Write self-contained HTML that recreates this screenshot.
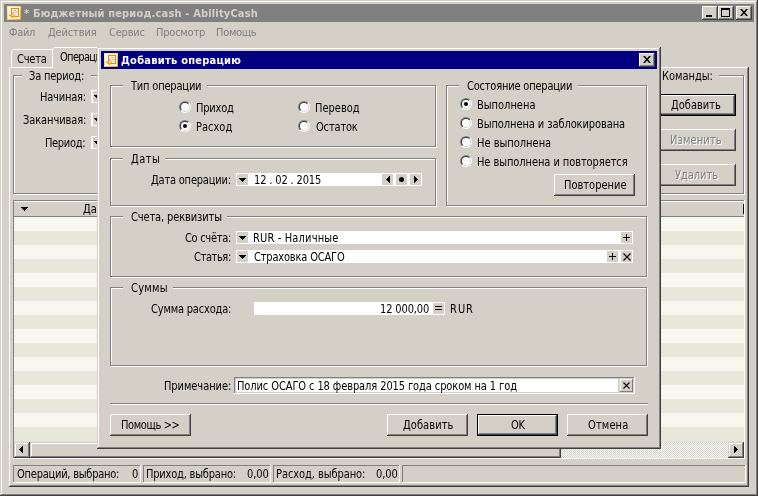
<!DOCTYPE html>
<html lang="ru"><head><meta charset="utf-8"><title>AbilityCash</title><style>
html,body{margin:0;padding:0}
body{width:758px;height:496px;position:relative;overflow:hidden;background:#d4d0c8;
font-family:"DejaVu Sans Condensed","DejaVu Sans","Liberation Sans",sans-serif;font-stretch:condensed;font-size:11px;color:#000}
#w{position:absolute;left:0;top:0;width:758px;height:496px;overflow:hidden}
#w div,#w span,#w svg{position:absolute;box-sizing:content-box}
.t{white-space:pre;line-height:13px;height:13px;will-change:transform}
.b{font-weight:bold}
.s{transform:scaleY(1.125);transform-origin:0 10px}
.r{width:12px;height:12px;border-radius:50%;background:linear-gradient(135deg,#808080 50%,#fff 50%)}
.r i,.r b,.r u{position:absolute;display:block}
.r i{left:1px;top:1px;width:10px;height:10px;border-radius:50%;background:linear-gradient(135deg,#404040 50%,#d4d0c8 50%)}
.r b{left:2px;top:2px;width:8px;height:8px;border-radius:50%;background:#fff}
.r u{position:absolute;left:4px;top:4px;width:4px;height:4px;border-radius:50%;background:#000}
</style></head><body><div id="w">
<div style="left:0px;top:0px;width:758px;height:496px;background:#d4d0c8;"></div>
<div style="left:1px;top:1px;width:755px;height:1px;background:#fff;"></div>
<div style="left:1px;top:1px;width:1px;height:493px;background:#fff;"></div>
<div style="left:756px;top:1px;width:1px;height:494px;background:#808080;"></div>
<div style="left:1px;top:494px;width:756px;height:1px;background:#808080;"></div>
<div style="left:757px;top:0px;width:1px;height:496px;background:#404040;"></div>
<div style="left:0px;top:495px;width:758px;height:1px;background:#404040;"></div>
<div style="left:4px;top:4px;width:750px;height:18px;background:#808080;"></div>
<svg class="ic" style="left:7px;top:6px" width="14" height="14" viewBox="0 0 14 14"><defs><linearGradient id="g1" x1="0" y1="0" x2="1" y2="1"><stop offset="0" stop-color="#fff2a8"/><stop offset="0.5" stop-color="#ffd060"/><stop offset="1" stop-color="#f09410"/></linearGradient></defs><rect width="14" height="14" fill="url(#g1)"/><rect x="1" y="1" width="12" height="12" fill="#fff4dc"/><rect x="2" y="2" width="2" height="9" fill="#fff"/><rect x="4.5" y="2.5" width="7" height="8" fill="#ffe2b8" stroke="#ee8608" stroke-width="1"/><path d="M5 3.5h6M5 5.5h6M5 7.5h6M7 9.5h4" stroke="#fff" stroke-width="1"/><path d="M7.5 4.5h2M6 6.5h1M8.5 6.5h1.5" stroke="#e89830" stroke-width="1"/><path d="M2 8.5l1.5 1.5 2.5-3M4.5 10.5l1.2 1.2 2.3-3" stroke="#f2a838" stroke-width="1.2" fill="none"/></svg>
<span id="t0" class="t b" style="left:24.00px;top:7px;letter-spacing:0.167px;color:#d4d0c8;">* Бюджетный период.cash - AbilityCash</span>
<div style="left:702px;top:6px;width:16px;height:14px;background:#404040;"></div>
<div style="left:702px;top:6px;width:15px;height:13px;background:#fff;"></div>
<div style="left:703px;top:7px;width:14px;height:12px;background:#808080;"></div>
<div style="left:703px;top:7px;width:13px;height:11px;background:#d4d0c8;"></div>
<div style="left:718px;top:6px;width:16px;height:14px;background:#404040;"></div>
<div style="left:718px;top:6px;width:15px;height:13px;background:#fff;"></div>
<div style="left:719px;top:7px;width:14px;height:12px;background:#808080;"></div>
<div style="left:719px;top:7px;width:13px;height:11px;background:#d4d0c8;"></div>
<div style="left:736px;top:6px;width:16px;height:14px;background:#404040;"></div>
<div style="left:736px;top:6px;width:15px;height:13px;background:#fff;"></div>
<div style="left:737px;top:7px;width:14px;height:12px;background:#808080;"></div>
<div style="left:737px;top:7px;width:13px;height:11px;background:#d4d0c8;"></div>
<div style="left:706px;top:15px;width:6px;height:2px;background:#000;"></div>
<div style="left:721px;top:8px;width:9px;height:9px;background:#000;"></div>
<div style="left:722px;top:10px;width:7px;height:6px;background:#d4d0c8;"></div>
<svg style="left:740px;top:9px" width="8" height="7" viewBox="0 0 8 7"><path d="M0 0h2l2 2.5L6 0h2L5 3.5 8 7H6L4 4.5 2 7H0l3-3.5z" fill="#000"/></svg>
<span id="t1" class="t n" style="left:9.00px;top:26px;letter-spacing:-0.333px;color:#808080;">Файл</span>
<span id="t2" class="t n" style="left:48.00px;top:26px;letter-spacing:-0.143px;color:#808080;">Действия</span>
<span id="t3" class="t n" style="left:109.00px;top:26px;letter-spacing:-0.200px;color:#808080;">Сервис</span>
<span id="t4" class="t n" style="left:155.50px;top:26px;letter-spacing:-0.214px;color:#808080;">Просмотр</span>
<span id="t5" class="t n" style="left:215.50px;top:26px;letter-spacing:-0.300px;color:#808080;">Помощь</span>
<div style="left:9px;top:67px;width:739px;height:1px;background:#fff;"></div>
<div style="left:9px;top:67px;width:1px;height:419px;background:#fff;"></div>
<div style="left:747px;top:68px;width:1px;height:418px;background:#808080;"></div>
<div style="left:10px;top:485px;width:738px;height:1px;background:#808080;"></div>
<div style="left:748px;top:67px;width:1px;height:420px;background:#404040;"></div>
<div style="left:9px;top:486px;width:740px;height:1px;background:#404040;"></div>
<div style="left:11px;top:51px;width:1px;height:16px;background:#fff;"></div>
<div style="left:12px;top:50px;width:1px;height:1px;background:#fff;"></div>
<div style="left:13px;top:49px;width:39px;height:1px;background:#fff;"></div>
<span id="t6" class="t s" style="left:17.30px;top:53px;letter-spacing:-0.225px;">Счета</span>
<div style="left:52px;top:47px;width:60px;height:21px;background:#d4d0c8;"></div>
<div style="left:52px;top:49px;width:1px;height:19px;background:#fff;"></div>
<div style="left:53px;top:48px;width:1px;height:1px;background:#fff;"></div>
<div style="left:54px;top:47px;width:57px;height:1px;background:#fff;"></div>
<span id="t7" class="t s" style="left:59.50px;top:51px;letter-spacing:-0.671px;">Операции</span>
<div style="left:14px;top:76px;width:385px;height:117px;border:1px solid #fff"></div>
<div style="left:13px;top:75px;width:385px;height:117px;border:1px solid #808080"></div>
<div style="left:22px;top:75px;width:69px;height:2px;background:#d4d0c8;"></div>
<span id="t8" class="t s" style="left:29.00px;top:70px;letter-spacing:-0.200px;">За период:</span>
<span id="t9" class="t s" style="left:39.50px;top:91px;letter-spacing:-0.214px;">Начиная:</span>
<div style="left:91px;top:90px;width:120px;height:13px;background:#fff;"></div>
<div style="left:93px;top:91px;width:11px;height:11px;background:#d4d0c8;"></div>
<div style="left:94px;top:95px;width:7px;height:1px;background:#000;"></div>
<div style="left:95px;top:96px;width:5px;height:1px;background:#000;"></div>
<div style="left:96px;top:97px;width:3px;height:1px;background:#000;"></div>
<div style="left:97px;top:98px;width:1px;height:1px;background:#000;"></div>
<span id="t10" class="t s" style="left:23.00px;top:114px;letter-spacing:-0.100px;">Заканчивая:</span>
<div style="left:91px;top:113px;width:120px;height:13px;background:#fff;"></div>
<div style="left:93px;top:114px;width:11px;height:11px;background:#d4d0c8;"></div>
<div style="left:94px;top:118px;width:7px;height:1px;background:#000;"></div>
<div style="left:95px;top:119px;width:5px;height:1px;background:#000;"></div>
<div style="left:96px;top:120px;width:3px;height:1px;background:#000;"></div>
<div style="left:97px;top:121px;width:1px;height:1px;background:#000;"></div>
<span id="t11" class="t s" style="left:45.00px;top:137px;letter-spacing:-0.333px;">Период:</span>
<div style="left:91px;top:136px;width:120px;height:13px;background:#fff;"></div>
<div style="left:93px;top:137px;width:11px;height:11px;background:#d4d0c8;"></div>
<div style="left:94px;top:141px;width:7px;height:1px;background:#000;"></div>
<div style="left:95px;top:142px;width:5px;height:1px;background:#000;"></div>
<div style="left:96px;top:143px;width:3px;height:1px;background:#000;"></div>
<div style="left:97px;top:144px;width:1px;height:1px;background:#000;"></div>
<div style="left:501px;top:76px;width:242px;height:117px;border:1px solid #fff"></div>
<div style="left:500px;top:75px;width:242px;height:117px;border:1px solid #808080"></div>
<div style="left:658px;top:75px;width:61px;height:2px;background:#d4d0c8;"></div>
<span id="t12" class="t s" style="left:662.00px;top:70px;letter-spacing:-0.029px;">Команды:</span>
<div style="left:600px;top:94px;width:136px;height:22px;background:#000;"></div>
<div style="left:601px;top:95px;width:134px;height:20px;background:#404040;"></div>
<div style="left:601px;top:95px;width:133px;height:19px;background:#fff;"></div>
<div style="left:602px;top:96px;width:132px;height:18px;background:#808080;"></div>
<div style="left:602px;top:96px;width:131px;height:17px;background:#d4d0c8;"></div>
<span id="t13" class="t s" style="left:671.00px;top:99px;letter-spacing:0.000px;">Добавить</span>
<div style="left:600px;top:129px;width:136px;height:22px;background:#404040;"></div>
<div style="left:600px;top:129px;width:135px;height:21px;background:#fff;"></div>
<div style="left:601px;top:130px;width:134px;height:20px;background:#808080;"></div>
<div style="left:601px;top:130px;width:133px;height:19px;background:#d4d0c8;"></div>
<span id="t14" class="t s" style="left:670.00px;top:134px;letter-spacing:0.129px;color:#808080;text-shadow:1px 1px 0 #fff;">Изменить</span>
<div style="left:600px;top:164px;width:136px;height:22px;background:#404040;"></div>
<div style="left:600px;top:164px;width:135px;height:21px;background:#fff;"></div>
<div style="left:601px;top:165px;width:134px;height:20px;background:#808080;"></div>
<div style="left:601px;top:165px;width:133px;height:19px;background:#d4d0c8;"></div>
<span id="t15" class="t s" style="left:674.50px;top:169px;letter-spacing:-0.050px;color:#808080;text-shadow:1px 1px 0 #fff;">Удалить</span>
<div style="left:13px;top:200px;width:732px;height:259px;background:#fff;"></div>
<div style="left:13px;top:200px;width:731px;height:258px;background:#808080;"></div>
<div style="left:14px;top:201px;width:730px;height:257px;background:#d4d0c8;"></div>
<div style="left:14px;top:201px;width:730px;height:1px;background:#fff;"></div>
<div style="left:14px;top:216px;width:730px;height:1px;background:#808080;"></div>
<div style="left:21px;top:207px;width:7px;height:1px;background:#000;"></div>
<div style="left:22px;top:208px;width:5px;height:1px;background:#000;"></div>
<div style="left:23px;top:209px;width:3px;height:1px;background:#000;"></div>
<div style="left:24px;top:210px;width:1px;height:1px;background:#000;"></div>
<span id="t16" class="t s" style="left:82.50px;top:203px;letter-spacing:0.000px;">Дата</span>
<div style="left:743px;top:204px;width:1px;height:10px;background:#000;"></div>
<div style="left:14px;top:217px;width:730px;height:14px;background:#f7f7ef;"></div>
<div style="left:14px;top:231px;width:730px;height:14px;background:#e7e7db;"></div>
<div style="left:14px;top:245px;width:730px;height:14px;background:#f7f7ef;"></div>
<div style="left:14px;top:259px;width:730px;height:14px;background:#e7e7db;"></div>
<div style="left:14px;top:273px;width:730px;height:14px;background:#f7f7ef;"></div>
<div style="left:14px;top:287px;width:730px;height:14px;background:#e7e7db;"></div>
<div style="left:14px;top:301px;width:730px;height:14px;background:#f7f7ef;"></div>
<div style="left:14px;top:315px;width:730px;height:14px;background:#e7e7db;"></div>
<div style="left:14px;top:329px;width:730px;height:14px;background:#f7f7ef;"></div>
<div style="left:14px;top:343px;width:730px;height:14px;background:#e7e7db;"></div>
<div style="left:14px;top:357px;width:730px;height:14px;background:#f7f7ef;"></div>
<div style="left:14px;top:371px;width:730px;height:14px;background:#e7e7db;"></div>
<div style="left:14px;top:385px;width:730px;height:14px;background:#f7f7ef;"></div>
<div style="left:14px;top:399px;width:730px;height:14px;background:#e7e7db;"></div>
<div style="left:14px;top:413px;width:730px;height:14px;background:#f7f7ef;"></div>
<div style="left:14px;top:427px;width:730px;height:14px;background:#e7e7db;"></div>
<div style="left:14px;top:441px;width:730px;height:1px;background:#e4e2d8;"></div>
<div style="left:14px;top:442px;width:730px;height:16px;background:conic-gradient(#fff 25%,#d4d0c8 0 50%,#fff 0 75%,#d4d0c8 0) 0 0/2px 2px;"></div>
<div style="left:14px;top:442px;width:16px;height:16px;background:#404040;"></div>
<div style="left:14px;top:442px;width:15px;height:15px;background:#d4d0c8;"></div>
<div style="left:15px;top:443px;width:14px;height:14px;background:#808080;"></div>
<div style="left:15px;top:443px;width:13px;height:13px;background:#fff;"></div>
<div style="left:16px;top:444px;width:12px;height:12px;background:#d4d0c8;"></div>
<div style="left:19px;top:449px;width:1px;height:1px;background:#000;"></div>
<div style="left:20px;top:448px;width:1px;height:3px;background:#000;"></div>
<div style="left:21px;top:447px;width:1px;height:5px;background:#000;"></div>
<div style="left:22px;top:446px;width:1px;height:7px;background:#000;"></div>
<div style="left:728px;top:442px;width:16px;height:16px;background:#404040;"></div>
<div style="left:728px;top:442px;width:15px;height:15px;background:#d4d0c8;"></div>
<div style="left:729px;top:443px;width:14px;height:14px;background:#808080;"></div>
<div style="left:729px;top:443px;width:13px;height:13px;background:#fff;"></div>
<div style="left:730px;top:444px;width:12px;height:12px;background:#d4d0c8;"></div>
<div style="left:734px;top:446px;width:1px;height:7px;background:#000;"></div>
<div style="left:735px;top:447px;width:1px;height:5px;background:#000;"></div>
<div style="left:736px;top:448px;width:1px;height:3px;background:#000;"></div>
<div style="left:737px;top:449px;width:1px;height:1px;background:#000;"></div>
<div style="left:30px;top:442px;width:531px;height:16px;background:#404040;"></div>
<div style="left:30px;top:442px;width:530px;height:15px;background:#d4d0c8;"></div>
<div style="left:31px;top:443px;width:529px;height:14px;background:#808080;"></div>
<div style="left:31px;top:443px;width:528px;height:13px;background:#fff;"></div>
<div style="left:32px;top:444px;width:527px;height:12px;background:#d4d0c8;"></div>
<div style="left:13px;top:465px;width:128px;height:1px;background:#808080;"></div>
<div style="left:13px;top:465px;width:1px;height:18px;background:#808080;"></div>
<div style="left:13px;top:482px;width:128px;height:1px;background:#fff;"></div>
<div style="left:140px;top:465px;width:1px;height:18px;background:#fff;"></div>
<div style="left:143px;top:465px;width:128px;height:1px;background:#808080;"></div>
<div style="left:143px;top:465px;width:1px;height:18px;background:#808080;"></div>
<div style="left:143px;top:482px;width:128px;height:1px;background:#fff;"></div>
<div style="left:270px;top:465px;width:1px;height:18px;background:#fff;"></div>
<div style="left:273px;top:465px;width:127px;height:1px;background:#808080;"></div>
<div style="left:273px;top:465px;width:1px;height:18px;background:#808080;"></div>
<div style="left:273px;top:482px;width:127px;height:1px;background:#fff;"></div>
<div style="left:399px;top:465px;width:1px;height:18px;background:#fff;"></div>
<div style="left:402px;top:465px;width:344px;height:1px;background:#808080;"></div>
<div style="left:402px;top:465px;width:1px;height:18px;background:#808080;"></div>
<div style="left:402px;top:482px;width:344px;height:1px;background:#fff;"></div>
<div style="left:745px;top:465px;width:1px;height:18px;background:#fff;"></div>
<span id="t17" class="t s" style="left:17.00px;top:468px;letter-spacing:-0.241px;">Операций, выбрано:</span>
<span id="t18" class="t s" style="left:132.00px;top:468px;letter-spacing:0.000px;">0</span>
<span id="t19" class="t s" style="left:146.00px;top:468px;letter-spacing:-0.200px;">Приход, выбрано:</span>
<span id="t20" class="t s" style="left:246.70px;top:468px;letter-spacing:-0.067px;">0,00</span>
<span id="t21" class="t s" style="left:275.70px;top:468px;letter-spacing:-0.073px;">Расход, выбрано:</span>
<span id="t22" class="t s" style="left:375.90px;top:468px;letter-spacing:-0.067px;">0,00</span>
<div style="left:97px;top:47px;width:564px;height:402px;background:#404040;"></div>
<div style="left:97px;top:47px;width:563px;height:401px;background:#d4d0c8;"></div>
<div style="left:98px;top:48px;width:562px;height:400px;background:#808080;"></div>
<div style="left:98px;top:48px;width:561px;height:399px;background:#fff;"></div>
<div style="left:99px;top:49px;width:560px;height:398px;background:#d4d0c8;"></div>
<div style="left:101px;top:51px;width:556px;height:18px;background:#000080;"></div>
<svg class="ic" style="left:104px;top:53px" width="14" height="14" viewBox="0 0 14 14"><defs><linearGradient id="g2" x1="0" y1="0" x2="1" y2="1"><stop offset="0" stop-color="#fff2a8"/><stop offset="0.5" stop-color="#ffd060"/><stop offset="1" stop-color="#f09410"/></linearGradient></defs><rect width="14" height="14" fill="url(#g2)"/><rect x="1" y="1" width="12" height="12" fill="#fff4dc"/><rect x="2" y="2" width="2" height="9" fill="#fff"/><rect x="4.5" y="2.5" width="7" height="8" fill="#ffe2b8" stroke="#ee8608" stroke-width="1"/><path d="M5 3.5h6M5 5.5h6M5 7.5h6M7 9.5h4" stroke="#fff" stroke-width="1"/><path d="M7.5 4.5h2M6 6.5h1M8.5 6.5h1.5" stroke="#e89830" stroke-width="1"/><path d="M2 8.5l1.5 1.5 2.5-3M4.5 10.5l1.2 1.2 2.3-3" stroke="#f2a838" stroke-width="1.2" fill="none"/></svg>
<span id="t23" class="t b" style="left:121.30px;top:54px;letter-spacing:0.256px;color:#fff;">Добавить операцию</span>
<div style="left:639px;top:53px;width:16px;height:14px;background:#404040;"></div>
<div style="left:639px;top:53px;width:15px;height:13px;background:#fff;"></div>
<div style="left:640px;top:54px;width:14px;height:12px;background:#808080;"></div>
<div style="left:640px;top:54px;width:13px;height:11px;background:#d4d0c8;"></div>
<svg style="left:643px;top:56px" width="8" height="7" viewBox="0 0 8 7"><path d="M0 0h2l2 2.5L6 0h2L5 3.5 8 7H6L4 4.5 2 7H0l3-3.5z" fill="#000"/></svg>
<div style="left:111px;top:86px;width:324px;height:60px;border:1px solid #fff"></div>
<div style="left:110px;top:85px;width:324px;height:60px;border:1px solid #808080"></div>
<div style="left:123px;top:85px;width:84px;height:2px;background:#d4d0c8;"></div>
<span id="t24" class="t s" style="left:131.20px;top:80px;letter-spacing:-0.191px;">Тип операции</span>
<div style="left:447px;top:86px;width:199px;height:119px;border:1px solid #fff"></div>
<div style="left:446px;top:85px;width:199px;height:119px;border:1px solid #808080"></div>
<div style="left:459px;top:85px;width:119px;height:2px;background:#d4d0c8;"></div>
<span id="t25" class="t s" style="left:466.80px;top:80px;letter-spacing:-0.200px;">Состояние операции</span>
<div style="left:111px;top:159px;width:324px;height:46px;border:1px solid #fff"></div>
<div style="left:110px;top:158px;width:324px;height:46px;border:1px solid #808080"></div>
<div style="left:123px;top:158px;width:42px;height:2px;background:#d4d0c8;"></div>
<span id="t26" class="t s" style="left:131.00px;top:153px;letter-spacing:0.467px;">Даты</span>
<div style="left:111px;top:217px;width:535px;height:59px;border:1px solid #fff"></div>
<div style="left:110px;top:216px;width:535px;height:59px;border:1px solid #808080"></div>
<div style="left:123px;top:216px;width:104px;height:2px;background:#d4d0c8;"></div>
<span id="t27" class="t s" style="left:130.60px;top:211px;letter-spacing:-0.127px;">Счета, реквизиты</span>
<div style="left:111px;top:288px;width:535px;height:77px;border:1px solid #fff"></div>
<div style="left:110px;top:287px;width:535px;height:77px;border:1px solid #808080"></div>
<div style="left:123px;top:287px;width:50px;height:2px;background:#d4d0c8;"></div>
<span id="t28" class="t s" style="left:130.60px;top:282px;letter-spacing:0.275px;">Суммы</span>
<div class="r" style="left:179px;top:101px"><i></i><b></b></div>
<span id="t29" class="t s" style="left:196.00px;top:102px;letter-spacing:-0.200px;">Приход</span>
<div class="r" style="left:179px;top:120px"><i></i><b></b><u></u></div>
<span id="t30" class="t s" style="left:196.00px;top:121px;letter-spacing:0.000px;">Расход</span>
<div class="r" style="left:298px;top:101px"><i></i><b></b></div>
<span id="t31" class="t s" style="left:315.00px;top:102px;letter-spacing:0.000px;">Перевод</span>
<div class="r" style="left:298px;top:120px"><i></i><b></b></div>
<span id="t32" class="t s" style="left:316.00px;top:121px;letter-spacing:-0.167px;">Остаток</span>
<div class="r" style="left:460px;top:98px"><i></i><b></b><u></u></div>
<span id="t33" class="t s" style="left:476.70px;top:99px;letter-spacing:-0.012px;">Выполнена</span>
<div class="r" style="left:460px;top:117px"><i></i><b></b></div>
<span id="t34" class="t s" style="left:476.70px;top:118px;letter-spacing:-0.087px;">Выполнена и заблокирована</span>
<div class="r" style="left:460px;top:136px"><i></i><b></b></div>
<span id="t35" class="t s" style="left:476.70px;top:137px;letter-spacing:-0.009px;">Не выполнена</span>
<div class="r" style="left:460px;top:155px"><i></i><b></b></div>
<span id="t36" class="t s" style="left:476.70px;top:156px;letter-spacing:-0.080px;">Не выполнена и повторяется</span>
<div style="left:554px;top:174px;width:81px;height:22px;background:#404040;"></div>
<div style="left:554px;top:174px;width:80px;height:21px;background:#fff;"></div>
<div style="left:555px;top:175px;width:79px;height:20px;background:#808080;"></div>
<div style="left:555px;top:175px;width:78px;height:19px;background:#d4d0c8;"></div>
<span id="t37" class="t s" style="left:563.80px;top:179px;letter-spacing:0.000px;">Повторение</span>
<span id="t38" class="t s" style="left:151.00px;top:174px;letter-spacing:-0.200px;">Дата операции:</span>
<div style="left:236px;top:173px;width:186px;height:13px;background:#fff;"></div>
<div style="left:237px;top:174px;width:11px;height:11px;background:#d4d0c8;"></div>
<div style="left:239px;top:178px;width:7px;height:1px;background:#000;"></div>
<div style="left:240px;top:179px;width:5px;height:1px;background:#000;"></div>
<div style="left:241px;top:180px;width:3px;height:1px;background:#000;"></div>
<div style="left:242px;top:181px;width:1px;height:1px;background:#000;"></div>
<span id="t39" class="t s" style="left:254.00px;top:174px;letter-spacing:-0.146px;">12 . 02 . 2015</span>
<div style="left:382px;top:174px;width:11px;height:11px;background:#d4d0c8;"></div>
<div style="left:386px;top:179px;width:1px;height:1px;background:#000;"></div>
<div style="left:387px;top:178px;width:1px;height:3px;background:#000;"></div>
<div style="left:388px;top:177px;width:1px;height:5px;background:#000;"></div>
<div style="left:389px;top:176px;width:1px;height:7px;background:#000;"></div>
<div style="left:396px;top:174px;width:11px;height:11px;background:#d4d0c8;"></div>
<div style="left:399px;top:177px;width:5px;height:5px;border-radius:50%;background:#000"></div>
<div style="left:410px;top:174px;width:11px;height:11px;background:#d4d0c8;"></div>
<div style="left:414px;top:176px;width:1px;height:7px;background:#000;"></div>
<div style="left:415px;top:177px;width:1px;height:5px;background:#000;"></div>
<div style="left:416px;top:178px;width:1px;height:3px;background:#000;"></div>
<div style="left:417px;top:179px;width:1px;height:1px;background:#000;"></div>
<span id="t40" class="t s" style="left:184.80px;top:232px;letter-spacing:-0.300px;">Со счёта:</span>
<div style="left:236px;top:231px;width:397px;height:13px;background:#fff;"></div>
<div style="left:237px;top:232px;width:11px;height:11px;background:#d4d0c8;"></div>
<div style="left:239px;top:236px;width:7px;height:1px;background:#000;"></div>
<div style="left:240px;top:237px;width:5px;height:1px;background:#000;"></div>
<div style="left:241px;top:238px;width:3px;height:1px;background:#000;"></div>
<div style="left:242px;top:239px;width:1px;height:1px;background:#000;"></div>
<span id="t41" class="t s" style="left:252.80px;top:232px;letter-spacing:0.154px;">RUR - Наличные</span>
<span id="t42" class="t s" style="left:193.80px;top:251px;letter-spacing:-0.400px;">Статья:</span>
<div style="left:236px;top:250px;width:397px;height:13px;background:#fff;"></div>
<div style="left:237px;top:251px;width:11px;height:11px;background:#d4d0c8;"></div>
<div style="left:239px;top:255px;width:7px;height:1px;background:#000;"></div>
<div style="left:240px;top:256px;width:5px;height:1px;background:#000;"></div>
<div style="left:241px;top:257px;width:3px;height:1px;background:#000;"></div>
<div style="left:242px;top:258px;width:1px;height:1px;background:#000;"></div>
<span id="t43" class="t s" style="left:253.80px;top:251px;letter-spacing:-0.179px;">Страховка ОСАГО</span>
<div style="left:621px;top:232px;width:11px;height:11px;background:#d4d0c8;"></div>
<div style="left:623px;top:237px;width:7px;height:1px;background:#000;"></div>
<div style="left:626px;top:234px;width:1px;height:7px;background:#000;"></div>
<div style="left:607px;top:251px;width:11px;height:11px;background:#d4d0c8;"></div>
<div style="left:609px;top:256px;width:7px;height:1px;background:#000;"></div>
<div style="left:612px;top:253px;width:1px;height:7px;background:#000;"></div>
<div style="left:621px;top:251px;width:11px;height:11px;background:#d4d0c8;"></div>
<svg style="left:623px;top:253px" width="8" height="8" viewBox="0 0 8 8"><path d="M0.5 0.5L7.5 7.5M7.5 0.5L0.5 7.5" stroke="#000" stroke-width="1.1" fill="none"/></svg>
<span id="t44" class="t s" style="left:150.50px;top:303px;letter-spacing:-0.192px;">Сумма расхода:</span>
<div style="left:254px;top:302px;width:191px;height:13px;background:#fff;"></div>
<span id="t45" class="t s" style="left:380.00px;top:303px;letter-spacing:-0.137px;">12 000,00</span>
<div style="left:433px;top:303px;width:11px;height:11px;background:#d4d0c8;"></div>
<div style="left:435px;top:306px;width:7px;height:1px;background:#000;"></div>
<div style="left:435px;top:309px;width:7px;height:1px;background:#000;"></div>
<span id="t46" class="t s" style="left:449.60px;top:303px;letter-spacing:1.000px;">RUR</span>
<span id="t47" class="t s" style="left:163.70px;top:380px;letter-spacing:-0.070px;">Примечание:</span>
<div style="left:234px;top:377px;width:401px;height:17px;background:#fff;"></div>
<div style="left:234px;top:377px;width:400px;height:1px;background:#808080;"></div>
<div style="left:234px;top:377px;width:1px;height:16px;background:#808080;"></div>
<div style="left:235px;top:378px;width:399px;height:15px;background:#d4d0c8;"></div>
<div style="left:236px;top:379px;width:382px;height:13px;background:#fff;"></div>
<span id="t48" class="t s" style="left:237.00px;top:380px;letter-spacing:-0.102px;">Полис ОСАГО с 18 февраля 2015 года сроком на 1 год</span>
<div style="left:618px;top:378px;width:16px;height:15px;background:#d4d0c8;"></div>
<div style="left:620px;top:379px;width:13px;height:13px;background:#808080;"></div>
<div style="left:620px;top:379px;width:12px;height:12px;background:#fff;"></div>
<div style="left:621px;top:380px;width:11px;height:11px;background:#d4d0c8;"></div>
<svg style="left:623px;top:382px" width="7" height="7" viewBox="0 0 7 7"><path d="M0.5 0.5L6.5 6.5M6.5 0.5L0.5 6.5" stroke="#000" stroke-width="1.1" fill="none"/></svg>
<div style="left:110px;top:403px;width:538px;height:1px;background:#808080;"></div>
<div style="left:110px;top:404px;width:538px;height:1px;background:#fff;"></div>
<div style="left:110px;top:414px;width:81px;height:22px;background:#404040;"></div>
<div style="left:110px;top:414px;width:80px;height:21px;background:#fff;"></div>
<div style="left:111px;top:415px;width:79px;height:20px;background:#808080;"></div>
<div style="left:111px;top:415px;width:78px;height:19px;background:#d4d0c8;"></div>
<span id="t49" class="t s" style="left:120.80px;top:419px;letter-spacing:-0.375px;">Помощь >></span>
<div style="left:387px;top:414px;width:81px;height:22px;background:#404040;"></div>
<div style="left:387px;top:414px;width:80px;height:21px;background:#fff;"></div>
<div style="left:388px;top:415px;width:79px;height:20px;background:#808080;"></div>
<div style="left:388px;top:415px;width:78px;height:19px;background:#d4d0c8;"></div>
<span id="t50" class="t s" style="left:403.00px;top:419px;letter-spacing:0.071px;">Добавить</span>
<div style="left:477px;top:414px;width:81px;height:22px;background:#000;"></div>
<div style="left:478px;top:415px;width:79px;height:20px;background:#404040;"></div>
<div style="left:478px;top:415px;width:78px;height:19px;background:#fff;"></div>
<div style="left:479px;top:416px;width:77px;height:18px;background:#808080;"></div>
<div style="left:479px;top:416px;width:76px;height:17px;background:#d4d0c8;"></div>
<span id="t51" class="t s" style="left:510.80px;top:419px;letter-spacing:-0.400px;">OK</span>
<div style="left:567px;top:414px;width:81px;height:22px;background:#404040;"></div>
<div style="left:567px;top:414px;width:80px;height:21px;background:#fff;"></div>
<div style="left:568px;top:415px;width:79px;height:20px;background:#808080;"></div>
<div style="left:568px;top:415px;width:78px;height:19px;background:#d4d0c8;"></div>
<span id="t52" class="t s" style="left:588.30px;top:419px;letter-spacing:0.120px;">Отмена</span>
</div></body></html>
